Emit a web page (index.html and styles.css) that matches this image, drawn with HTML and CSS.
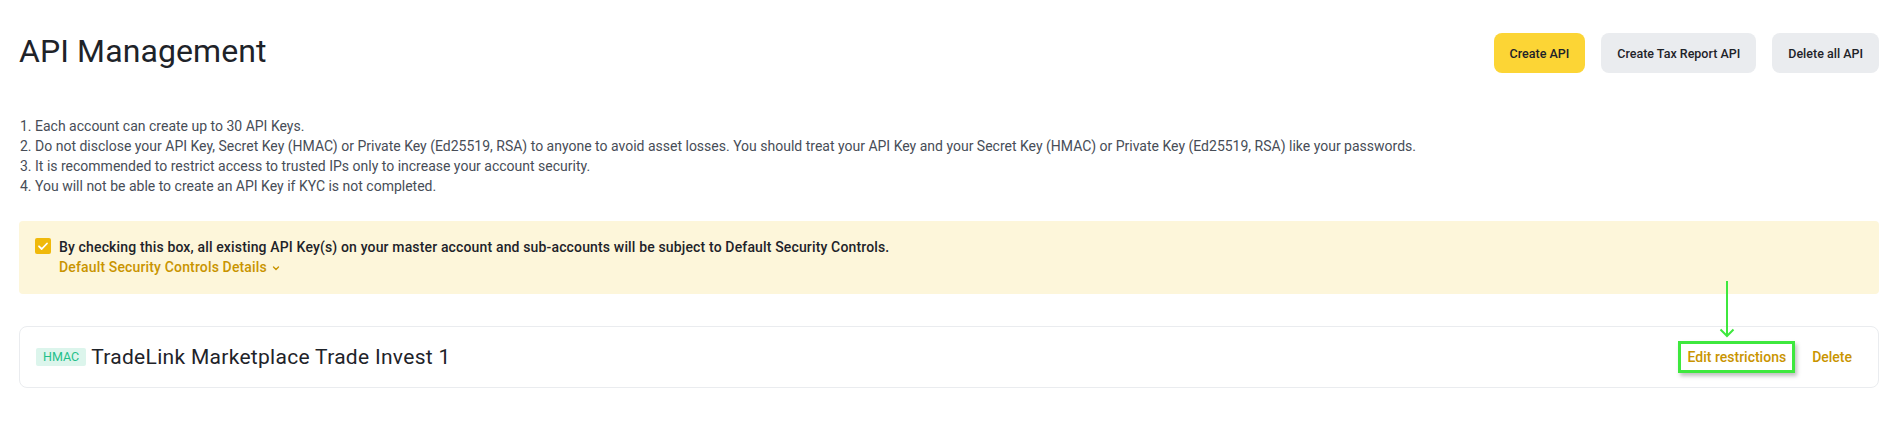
FILE: index.html
```html
<!DOCTYPE html>
<html lang="en">
<head>
<meta charset="utf-8">
<title>API Management</title>
<link rel="stylesheet" href="styles.css">
</head>
<body>
<div class="page">
  <header class="header">
    <h1 class="title">API Management</h1>
    <div class="actions">
      <button class="btn btn-primary">Create API</button>
      <button class="btn btn-secondary">Create Tax Report API</button>
      <button class="btn btn-secondary">Delete all API</button>
    </div>
  </header>

  <ol class="notes">
    <li>1. Each account can create up to 30 API Keys.</li>
    <li>2. Do not disclose your API Key, Secret Key (HMAC) or Private Key (Ed25519, RSA) to anyone to avoid asset losses. You should treat your API Key and your Secret Key (HMAC) or Private Key (Ed25519, RSA) like your passwords.</li>
    <li>3. It is recommended to restrict access to trusted IPs only to increase your account security.</li>
    <li>4. You will not be able to create an API Key if KYC is not completed.</li>
  </ol>

  <div class="banner">
    <span class="checkbox">
      <svg viewBox="0 0 16 16" width="16" height="16"><path d="M4 8.3l2.7 2.7L12 5.5" fill="none" stroke="#fff" stroke-width="1.8" stroke-linecap="round" stroke-linejoin="round"/></svg>
    </span>
    <div class="banner-text">
      <div class="banner-msg">By checking this box, all existing API Key(s) on your master account and sub-accounts will be subject to Default Security Controls.</div>
      <div class="banner-link">Default Security Controls Details
        <svg class="chev" viewBox="0 0 8 8" width="8" height="8"><path d="M1.5 3l2.5 2.5L6.5 3" fill="none" stroke="#c99400" stroke-width="1.4" stroke-linecap="round" stroke-linejoin="round"/></svg>
      </div>
    </div>
  </div>

  <div class="card">
    <div class="card-left">
      <span class="badge">HMAC</span>
      <span class="key-name">TradeLink Marketplace Trade Invest 1</span>
    </div>
    <div class="card-right">
      <span class="link edit">Edit restrictions
        <span class="highlight"></span>
        <span class="arrow">
          <svg viewBox="0 0 16 57" width="16" height="57"><path d="M8 0V55" stroke="#3ee83e" stroke-width="2" fill="none"/><path d="M1.5 48.5l6.5 6.5 6.5-6.5" stroke="#3ee83e" stroke-width="2" fill="none"/></svg>
        </span>
      </span>
      <span class="link">Delete</span>
    </div>
  </div>
</div>
</body>
</html>
```

FILE: styles.css
```css
* { box-sizing: border-box; }
html, body { margin: 0; padding: 0; background: #fff; }
body {
  font-family: Roboto, "Noto Sans", "Liberation Sans", sans-serif;
  color: #1e2329;
}
.page { padding: 33px 19px 0 19px; }

.header {
  display: flex;
  justify-content: space-between;
  align-items: center;
  height: 40px;
}
.title {
  margin: 0;
  font-size: 32px;
  font-weight: 400;
  line-height: 40px;
  color: #1e2329;
  letter-spacing: 0.1px;
  position: relative;
  top: -2px;
}
.actions { display: flex; gap: 16px; }
.btn {
  height: 40px;
  border: none;
  border-radius: 8px;
  font-family: inherit;
  font-size: 12.5px;
  font-weight: 500;
  color: #1e2329;
  padding: 0 16px;
  cursor: pointer;
}
.btn-primary { background: #fcd535; }
.btn-secondary { background: #eaecef; }

.notes {
  list-style: none;
  margin: 43px 0 0 0;
  padding: 0 0 0 1px;
  font-size: 14px;
  line-height: 20px;
  color: #474d57;
}

.banner {
  margin-top: 25px;
  background: #fdf6da;
  border-radius: 4px;
  padding: 16px 16px 17px 16px;
  display: flex;
  gap: 8px;
  align-items: flex-start;
}
.checkbox {
  width: 16px;
  height: 16px;
  flex: none;
  background: #f0b90b;
  border-radius: 2px;
  display: flex;
  margin-top: 1px;
}
.banner-text { font-size: 14px; line-height: 20px; letter-spacing: 0.15px; }
.banner-msg { color: #1e2329; font-weight: 500; }
.banner-link { color: #c99400; font-weight: 500; display: flex; align-items: center; gap: 5px; }
.chev { margin-top: 2px; }

.card {
  margin-top: 32px;
  height: 62px;
  border: 1px solid #eaecef;
  border-radius: 8px;
  display: flex;
  align-items: center;
  justify-content: space-between;
  padding: 0 26px 0 16px;
}
.card-left { display: flex; align-items: center; gap: 5px; }
.badge {
  height: 18px;
  padding: 0 7px;
  background: #dcf5ec;
  color: #1fc089;
  font-size: 12.5px;
  line-height: 18px;
  border-radius: 2px;
}
.key-name { font-size: 21px; line-height: 28px; color: #1e2329; letter-spacing: 0.3px; }
.card-right { display: flex; align-items: center; gap: 26px; }
.link {
  color: #c99400;
  font-size: 14px;
  font-weight: 500;
  line-height: 20px;
  position: relative;
}
.highlight {
  position: absolute;
  left: -10px;
  right: -9px;
  top: -6px;
  bottom: -6px;
  border: 3px solid #3ee83e;
  box-shadow: 2px 3px 4px rgba(0, 0, 0, 0.25);
}
.arrow {
  position: absolute;
  z-index: 2;
  left: 31px;
  top: -66px;
  width: 16px;
  height: 57px;
  display: block;
}
.arrow svg { display: block; }
```
